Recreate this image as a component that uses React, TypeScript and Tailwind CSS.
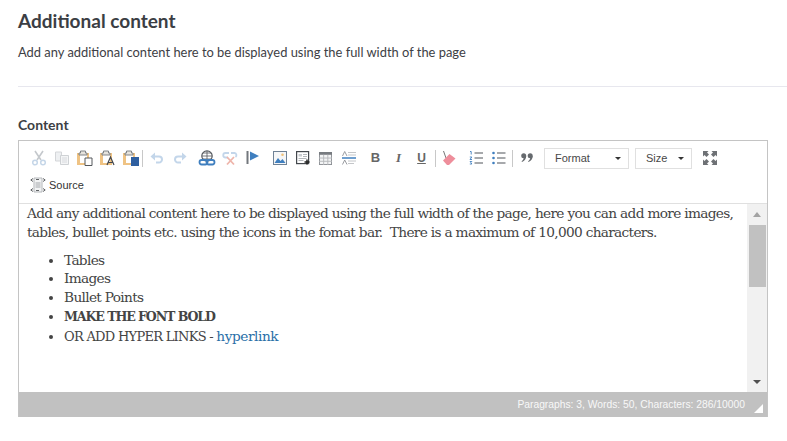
const Cut = () => (
  <svg width="16" height="16" viewBox="0 0 16 16" fill="none">
    <path d="M4 1l6 9M12 1L6 10" stroke="#c4c8cc" strokeWidth="1.600" />
    <circle cx="4" cy="12.500" r="2.300" stroke="#c5d6e8" strokeWidth="1.500" />
    <circle cx="12" cy="12.500" r="2.300" stroke="#c5d6e8" strokeWidth="1.500" />
  </svg>
);

const Copy = () => (
  <svg width="16" height="16" viewBox="0 0 16 16" fill="none">
    <path d="M1.500 2h6v9h-6z" fill="#eef0f2" stroke="#d4d6d9" />
    <path d="M6.500 5.500h8v9h-8z" fill="#f4f5f6" stroke="#cfd2d5" />
    <path d="M8 8h5M8 10h5M8 12h5" stroke="#d8dade" />
  </svg>
);

const Clip = ({ children }: { children?: React.ReactNode }) => (
  <svg width="16" height="16" viewBox="0 0 16 16" fill="none">
    <path d="M0 3h12v12H0z" fill="#efc384" />
    <path d="M3 5h7v8H3z" fill="#fff" />
    <path d="M3.500 3V1h5v2h1.500v2H2V3z" fill="#e6e3dd" stroke="#75797e" strokeWidth=".9" />
    {children}
  </svg>
);

const Undo = ({ flip }: { flip?: boolean }) => (
  <svg width="16" height="16" viewBox="0 0 16 16" fill="none" className={flip ? "-scale-x-100" : ""}>
    <path d="M5 6.500h5a3 3 0 0 1 0 6H7" stroke="#c3d6ea" strokeWidth="2" />
    <path d="M6 2.500L1.500 6.500 6 10.500z" fill="#c3d6ea" />
  </svg>
);

const LinkIcon = () => (
  <svg width="18" height="16" viewBox="0 0 18 16" fill="none">
    <circle cx="9" cy="6" r="5.200" stroke="#55595e" strokeWidth="1.200" />
    <path d="M9 1v10M4 6h10M5 3h8M5 9h8" stroke="#55595e" strokeWidth=".8" />
    <rect x="1.500" y="10" width="8" height="4.500" rx="2.200" stroke="#3f7fbf" strokeWidth="1.800" />
    <rect x="8.500" y="10" width="8" height="4.500" rx="2.200" stroke="#3f7fbf" strokeWidth="1.800" />
  </svg>
);

const Unlink = () => (
  <svg width="16" height="16" viewBox="0 0 16 16" fill="none">
    <path d="M7 3H3.500a2.200 2.200 0 0 0 0 4.500H6M9 3h3.500a2.200 2.200 0 0 1 1 4" stroke="#c3d6ea" strokeWidth="1.800" />
    <path d="M5 7l7 7.500M12 7l-7 7.500" stroke="#eeb5ab" strokeWidth="1.800" />
  </svg>
);

const Flag = () => (
  <svg width="14" height="16" viewBox="0 0 14 16" fill="none">
    <path d="M1.500 1v13" stroke="#73777c" strokeWidth="2" />
    <path d="M4 1.500l9 4.500-9 4.500z" fill="#3f7fbf" />
  </svg>
);

const ImageIcon = () => (
  <svg width="14" height="14" viewBox="0 0 14 14" fill="none">
    <rect x=".5" y=".5" width="13" height="13" fill="#f6f7f8" stroke="#6f8296" />
    <circle cx="9.500" cy="3.800" r="1.300" fill="#f0c27a" />
    <path d="M1.500 12l3.500-5 2.500 3 2-2 3 4z" fill="#3f7fbf" />
  </svg>
);

const Template = () => (
  <svg width="14" height="14" viewBox="0 0 14 14" fill="none">
    <rect x=".6" y=".6" width="12" height="12" stroke="#44484d" strokeWidth="1.200" />
    <path d="M2.500 3h3.500v2.500H2.500z" fill="#c9ccd0" />
    <path d="M7 3.500h4M7 5.500h4M2.500 7.500h8M2.500 9.500h5" stroke="#b4b7bb" />
    <path d="M11 8.500v5M8.500 11h5" stroke="#222" strokeWidth="1.500" />
  </svg>
);

const TableIcon = () => (
  <svg width="13" height="13" viewBox="0 0 14 14" fill="none">
    <rect x=".5" y=".5" width="13" height="13" fill="#f3f4f5" stroke="#8b8f94" />
    <path d="M0 0h14v3H0z" fill="#777b80" />
    <path d="M5 3v11M9.500 3v11M0 6.500h14M0 10h14" stroke="#b5b8bb" />
  </svg>
);

const HrLetters = () => (
  <svg width="14" height="14" viewBox="0 0 14 14" fill="none">
    <path d="M.5 5l2.200-4.500L5 5M.5 13.500l2.200-4.500L5 13.500" stroke="#8e9297" strokeWidth=".9" />
    <path d="M6 1.500h8M6 4h8M6 10h8M6 12.500h6" stroke="#c4c6c9" />
    <path d="M0 7h14" stroke="#3f7fbf" strokeWidth="1.500" />
  </svg>
);

const Eraser = () => (
  <svg width="14" height="16" viewBox="0 0 14 16" fill="none">
    <path d="M1.500 1L4 8" stroke="#777" />
    <path d="M1 10.500L7.500 4l6 4.500L7 15H5z" fill="#ee8e9b" />
  </svg>
);

const Ol = () => (
  <svg width="14" height="14" viewBox="0 0 14 14" fill="none">
    <path d="M1 .5h1.200v3M.8 6h2L1 8.500h2M.8 10.500h2l-1 1 1 1.500h-2" stroke="#3f7fbf" strokeWidth=".9" />
    <path d="M5.500 2h8.500M5.500 7h8.500M5.500 12h8.500" stroke="#8a8d91" strokeWidth="1.400" />
  </svg>
);

const Ul = () => (
  <svg width="14" height="14" viewBox="0 0 14 14" fill="none">
    <circle cx="1.500" cy="2" r="1.300" fill="#3f7fbf" />
    <circle cx="1.500" cy="7" r="1.300" fill="#3f7fbf" />
    <circle cx="1.500" cy="12" r="1.300" fill="#3f7fbf" />
    <path d="M5 2h8.500M5 7h8.500M5 12h8.500" stroke="#8a8d91" strokeWidth="1.400" />
  </svg>
);

const Quote = () => (
  <svg width="12" height="10" viewBox="0 0 12 10" fill="#666a6e">
    <circle cx="2.700" cy="2.800" r="2.500" />
    <circle cx="9.200" cy="2.800" r="2.500" />
    <path d="M5.200 3C5.200 6 3.500 8 1 9l-.4-.8C2 7.300 2.800 6 2.800 4zM11.700 3c0 3-1.700 5-4.200 6l-.4-.8C8.500 7.300 9.300 6 9.300 4z" />
  </svg>
);

const Maximize = () => (
  <svg width="14" height="14" viewBox="0 0 14 14" fill="#6e7175">
    <path d="M0 0h5.500L4 1.500 6 3.500 3.500 6 1.500 4 0 5.500zM14 0v5.500L12.500 4l-2 2L8 3.500l2-2L8.500 0zM0 14V8.500L1.500 10l2-2L6 10.500l-2 2L5.500 14zM14 14H8.500l1.500-1.500-2-2L10.500 8l2 2L14 8.500z" />
  </svg>
);

const SourceIcon = () => (
  <svg width="16" height="16" viewBox="0 0 16 16" fill="none">
    <path d="M4 1h8v14H4z" fill="#f2f3f4" stroke="#b4b7ba" />
    <path d="M5.500 6h5M5.500 8h5M5.500 10h5" stroke="#a4a7ab" />
    <path d="M3 1.500L.8 3 3 4.500M6 2.500h3M13 1.500L15.200 3 13 4.500M3 11.500L.8 13 3 14.500M6 13.500h3M13 11.500l2.200 1.500-2.200 1.500" stroke="#4f5256" strokeWidth=".9" />
  </svg>
);

const Btn = ({ children }: { children: React.ReactNode }) => (
  <div className="w-[23px] h-[24px] flex items-center justify-center shrink-0">{children}</div>
);

const Sep = ({ className }: { className: string }) => <div className={`w-px h-[17px] bg-[#c8c8c8] shrink-0 ${className}`} />;

const Combo = ({ label, w }: { label: string; w: string }) => (
  <div className={`${w} h-[21px] border border-[#e0e0e0] flex items-center justify-between pl-[10px] pr-[7px] text-[11px] text-[#484848] shrink-0`}>
    {label}
    <span className="w-0 h-0 border-x-[3.5px] border-x-transparent border-t-[3px] border-t-[#333]" />
  </div>
);

const Toolbar = () => (
  <div className="h-[63px] border-b border-[#e0e0e0] pl-[8px] pt-[5px] font-['Liberation_Sans',sans-serif]">
    <div className="flex items-center h-[24px]">
      <Btn><Cut /></Btn>
      <Btn><Copy /></Btn>
      <Btn><Clip><path d="M8 8h7v7.500H8z" fill="#fff" stroke="#55585c" /></Clip></Btn>
      <Btn><Clip><path d="M7 15l3.500-8L14 15M8.500 12.500h4" stroke="#44484d" strokeWidth="1.200" /></Clip></Btn>
      <Btn><Clip><path d="M8 7h8v9H8z" fill="#2f5f9f" /></Clip></Btn>
      <Sep className="mr-[2px]" />
      <Btn><Undo /></Btn>
      <Btn><Undo flip /></Btn>
      <div className="w-[4px]" />
      <Btn><LinkIcon /></Btn>
      <Btn><Unlink /></Btn>
      <Btn><Flag /></Btn>
      <div className="w-[4px]" />
      <Btn><ImageIcon /></Btn>
      <Btn><Template /></Btn>
      <Btn><TableIcon /></Btn>
      <Btn><HrLetters /></Btn>
      <div className="w-[4px]" />
      <Btn><b className="text-[13px] text-[#666]">B</b></Btn>
      <Btn><i className="text-[13px] text-[#666] font-bold font-['Liberation_Serif',serif]">I</i></Btn>
      <Btn><u className="text-[12px] text-[#666] font-bold">U</u></Btn>
      <Sep className="ml-[2px] mr-[1px]" />
      <Btn><Eraser /></Btn>
      <div className="w-[4px]" />
      <Btn><Ol /></Btn>
      <Btn><Ul /></Btn>
      <Sep className="ml-[2px] mr-[2px]" />
      <Btn><Quote /></Btn>
      <div className="w-[6px]" />
      <Combo label="Format" w="w-[85px]" />
      <div className="w-[6px]" />
      <Combo label="Size" w="w-[57px]" />
      <div className="w-[6px]" />
      <Btn><Maximize /></Btn>
    </div>
    <div className="flex items-center h-[24px] mt-[3px] pl-[3px] gap-[2px] text-[11px] text-[#333]">
      <SourceIcon />
      <span className="ml-[1px]">Source</span>
    </div>
  </div>
);

const Scrollbar = () => (
  <div className="w-[20px] bg-[#f1f1f1] flex flex-col items-center shrink-0">
    <div className="h-[21px] w-full flex items-center justify-center">
      <span className="w-0 h-0 border-x-[4.5px] border-x-transparent border-b-[5px] border-b-[#a3a3a3]" />
    </div>
    <div className="w-[17px] h-[62px] bg-[#c1c1c1]" />
    <div className="flex-1" />
    <div className="h-[21px] w-full flex items-center justify-center">
      <span className="w-0 h-0 border-x-[4px] border-x-transparent border-t-[4px] border-t-[#505050]" />
    </div>
  </div>
);

const App = () => {
  return (
    <div className="w-[787px] h-[441px] bg-white pl-[18px] pt-[9px] overflow-hidden font-['Lato',sans-serif] text-[#3d4045]">
      <h1 className="text-[19px] leading-[24px] font-bold text-[#3b3e44]">Additional content</h1>
      <p className="text-[12.9px] leading-[18px] mt-[10px] text-[#3d4045]">
        Add any additional content here to be displayed using the full width of the page
      </p>
      <div className="border-t border-[#e7e7ee] mt-[25px]" />
      <div className="text-[14px] leading-[18px] font-bold mt-[29px]">Content</div>
      <div className="w-[750px] h-[277px] mt-[6px] border border-[#c4c4c4] border-b-0 flex flex-col">
        <Toolbar />
        <div className="flex h-[188px]">
          <div className="flex-1 pl-[8px] text-[13.7px] leading-[18.75px] text-[#444] font-['DejaVu_Serif',serif] tracking-[-0.68px]">
            <p>
              Add any additional content here to be displayed using the full width of the page, here you can add more images,
              <br />
              tables, bullet points etc. using the icons in the fomat bar.&nbsp; There is a maximum of 10,000 characters.
            </p>
            <ul className="list-disc pl-[37px] mt-[9px]">
              <li>Tables</li>
              <li>Images</li>
              <li>Bullet Points</li>
              <li className="font-bold"><span className="text-[12.6px] tracking-[-1.1px]">MAKE THE FONT BOLD</span></li>
              <li>
                <span className="text-[13px] tracking-[-0.72px]">OR ADD HYPER LINKS - </span>
                <a className="text-[#2a6fa8] tracking-[-0.45px]">hyperlink</a>
              </li>
            </ul>
          </div>
          <Scrollbar />
        </div>
        <div className="h-[25px] bg-[#c1c1c1] relative flex items-center justify-end pr-[22px] text-[10.3px] text-[#f8f8f8] font-['Liberation_Sans',sans-serif]">
          Paragraphs: 3, Words: 50, Characters: 286/10000
          <span className="absolute right-[4px] bottom-[4px] w-0 h-0 border-l-[9px] border-l-transparent border-b-[9px] border-b-white" />
        </div>
      </div>
    </div>
  );
};

export default App;
